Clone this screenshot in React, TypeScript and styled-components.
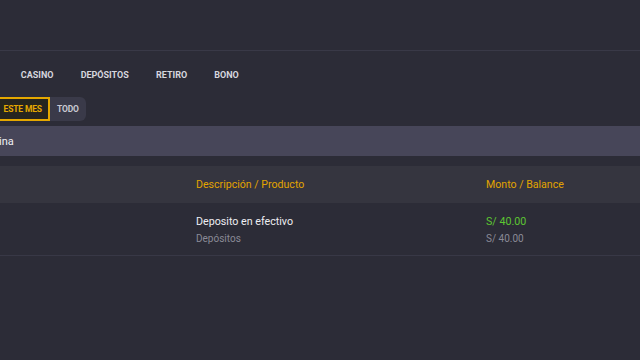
import styled, { createGlobalStyle } from 'styled-components';

const GlobalStyle = createGlobalStyle`
  html, body {
    margin: 0;
    padding: 0;
    background: #2c2c37;
    overflow: hidden;
  }
  body {
    font-family: Roboto, "Liberation Sans", sans-serif;
    width: 640px;
    height: 360px;
  }
`;

const Page = styled.div`
  margin-left: -80px;
  width: 720px;
  min-height: 360px;
  background: #2c2c37;
`;

const TopBar = styled.div`
  height: 50px;
  border-bottom: 1px solid #393947;
`;

const Tabs = styled.nav`
  display: flex;
  gap: 27.2px;
  padding: 9px 0 0 29px;
  height: 29px;
  align-items: center;
`;

const Tab = styled.span`
  font-size: 9px;
  font-weight: 700;
  color: #d6d6de;
`;

const Filters = styled.div`
  display: flex;
  padding: 8px 0 0 45px;
`;

const FilterButton = styled.button<{ $active?: boolean; $first?: boolean; $last?: boolean }>`
  box-sizing: border-box;
  height: 24px;
  padding: 0 ${(p) => (p.$active ? '6px' : '7px')};
  font-family: inherit;
  font-size: 8.5px;
  letter-spacing: -0.15px;
  font-weight: 700;
  cursor: pointer;
  background: ${(p) => (p.$active ? '#26251f' : '#3a3a49')};
  color: ${(p) => (p.$active ? '#e5a800' : '#c9c9d2')};
  border: ${(p) => (p.$active ? '2px solid #e5a800' : 'none')};
  border-radius: ${(p) => (p.$first ? '6px 0 0 6px' : p.$last ? '0 6px 6px 0' : '0')};
`;

const PageBar = styled.div`
  margin-top: 5px;
  height: 30px;
  display: flex;
  align-items: center;
  padding-left: 60px;
  background: #474659;
  color: #f0f0f4;
  font-size: 11px;
`;

const Table = styled.div`
  margin-top: 10px;
`;

const Row = styled.div<{ $head?: boolean }>`
  display: grid;
  grid-template-columns: 260px 290px 1fr;
  padding-left: 16px;
  align-items: center;
  background: ${(p) => (p.$head ? '#35353f' : '#2c2c37')};
  height: ${(p) => (p.$head ? '37px' : '52px')};
  border-bottom: ${(p) => (p.$head ? 'none' : '1px solid #383846')};
`;

const HeadCell = styled.div`
  color: #e2a400;
  font-size: 10.6px;
`;

const Cell = styled.div`
  display: flex;
  flex-direction: column;
  gap: 5px;
`;

const Main = styled.span<{ $tone?: 'green' }>`
  font-size: 10.7px;
  color: ${(p) => (p.$tone === 'green' ? '#5cc632' : '#eeeef2')};
`;

const Sub = styled.span`
  font-size: 10px;
  color: #8a8a96;
`;

export default function App() {
  return (
    <>
      <GlobalStyle />
      <Page>
        <TopBar />
        <Tabs>
          <Tab>DEPORTES</Tab>
          <Tab>CASINO</Tab>
          <Tab>DEPÓSITOS</Tab>
          <Tab>RETIRO</Tab>
          <Tab>BONO</Tab>
        </Tabs>
        <Filters>
          <FilterButton $first>HOY</FilterButton>
          <FilterButton $active>ESTE MES</FilterButton>
          <FilterButton $last>TODO</FilterButton>
        </Filters>
        <PageBar>Página</PageBar>
        <Table>
          <Row $head>
            <HeadCell>Fecha</HeadCell>
            <HeadCell>Descripción / Producto</HeadCell>
            <HeadCell>Monto / Balance</HeadCell>
          </Row>
          <Row>
            <Cell>
              <Main>01/05</Main>
              <Sub>10:24</Sub>
            </Cell>
            <Cell>
              <Main>Deposito en efectivo</Main>
              <Sub>Depósitos</Sub>
            </Cell>
            <Cell>
              <Main $tone="green">S/ 40.00</Main>
              <Sub>S/ 40.00</Sub>
            </Cell>
          </Row>
        </Table>
      </Page>
    </>
  );
}
